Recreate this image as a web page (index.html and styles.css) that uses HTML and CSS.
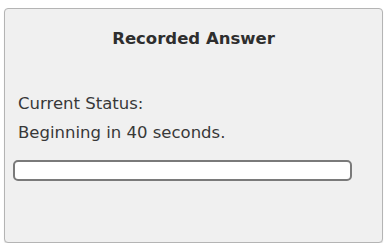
FILE: index.html
```html
<!DOCTYPE html>
<html>
<head>
<meta charset="utf-8">
<link rel="stylesheet" href="styles.css">
</head>
<body>
<div class="panel">
  <div class="title">Recorded Answer</div>
  <div class="status">
    <div class="line">Current Status:</div>
    <div class="line">Beginning in 40 seconds.</div>
  </div>
  <div class="progress"></div>
</div>
</body>
</html>
```
FILE: styles.css
```css
html, body {
  margin: 0;
  padding: 0;
  background: #ffffff;
}
body {
  padding: 8px 0 0 4px;
  font-family: "DejaVu Sans", sans-serif;
  color: #383838;
}
.panel {
  box-sizing: border-box;
  width: 379px;
  height: 235px;
  background: #f0f0f0;
  border: 1px solid #b4b4b4;
  border-radius: 4px;
  box-shadow: 0 1px 1px rgba(0,0,0,0.12);
}
.title {
  text-align: center;
  font-weight: bold;
  font-size: 16.5px;
  line-height: 20px;
  margin-top: 20px;
  color: #2e2e2e;
}
.status {
  padding-left: 13px;
  margin-top: 40px;
  font-size: 16.5px;
}
.line {
  line-height: 29px;
}
.progress {
  box-sizing: border-box;
  margin: 13px 0 0 8px;
  width: 339px;
  height: 21px;
  background: #ffffff;
  border: 2px solid #7a7a7a;
  border-radius: 5px;
}
```
